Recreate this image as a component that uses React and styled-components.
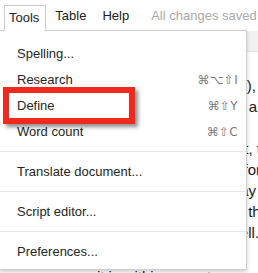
import React from "react";
import styled, { createGlobalStyle } from "styled-components";

const GlobalStyle = createGlobalStyle`
    html, body {
        margin: 0;
        padding: 0;
        background: #fff;
        overflow: hidden;
    }
    body {
        font-family: "Liberation Sans", Arial, sans-serif;
    }
`;

const Page = styled.div`
    width: 258px;
    height: 273px;
    overflow: hidden;
    display: flex;
    flex-direction: column;
    background: #fff;
`;

const MenuBar = styled.div`
    height: 30px;
    flex-shrink: 0;
    display: flex;
    align-items: flex-end;
    padding-left: 4px;
    font-size: 13px;
    color: #222;
    white-space: nowrap;
`;

const Tab = styled.div`
    position: relative;
    z-index: 3;
    height: 26px;
    margin-bottom: -1px;
    margin-right: 1px;
    padding: 0 6px 0 4px;
    line-height: 24px;
    box-sizing: border-box;
    background: #fff;
    border: 1px solid #cdcdcd;
    border-bottom: none;
`;

const Label = styled.div`
    height: 25px;
    line-height: 24px;
    padding: 0 8px;
    box-sizing: border-box;
    margin-bottom: 1px;
`;

const Status = styled.div`
    height: 25px;
    line-height: 24px;
    margin-left: 14px;
    margin-bottom: 1px;
    color: #aaa;
`;

const Body = styled.div`
    position: relative;
    flex: 1;
`;

const Doc = styled.div`
    display: flex;
    flex-direction: column;
    font-size: 15px;
    color: #1a1a1a;
`;

const Ruler = styled.div`
    height: 21px;
    margin-top: 1px;
    background: #f2f2f2;
    border-bottom: 1px solid #e2e2e2;
    box-sizing: border-box;
`;

const Lines = styled.div`
    padding-top: 23px;
    display: flex;
    flex-direction: column;
`;

const Line = styled.div`
    height: 21px;
    line-height: 21px;
    display: flex;
    justify-content: flex-end;
    white-space: nowrap;
    margin-right: ${(p) => p.$shift}px;
    margin-top: ${(p) => p.$gap || 0}px;
`;

const Menu = styled.div`
    position: absolute;
    top: 0;
    left: -1px;
    z-index: 2;
    width: 248px;
    box-sizing: border-box;
    padding: 10px 0 4px;
    background: #fff;
    border: 1px solid #cfcfcf;
    box-shadow: 0 2px 4px rgba(0, 0, 0, 0.2);
    font-size: 13px;
    color: #262626;
`;

const Item = styled.div`
    height: 26px;
    line-height: 26px;
    padding: 0 8px 0 17px;
    display: flex;
    justify-content: space-between;
    white-space: nowrap;
`;

const Shortcut = styled.span`
    font-family: "DejaVu Sans", "Liberation Sans", sans-serif;
    font-size: 12px;
    color: #7a7a7a;
    letter-spacing: 0.3px;
`;

const Divider = styled.div`
    height: 1px;
    background: #e6e6e6;
    margin: 6px 0 7px;
`;

const Highlight = styled.div`
    position: absolute;
    top: 56px;
    left: 3px;
    width: 132px;
    height: 37px;
    box-sizing: border-box;
    border: 6px solid #f0291f;
    box-shadow: 3px 3px 4px rgba(0, 0, 0, 0.45);
`;

const docLines = [
    { text: "the figure is cited in (this),", shift: 2 },
    { text: "which will also provide a", shift: 1 },
    { text: "", shift: 0 },
    { text: "it is correct, t", shift: -3 },
    { text: "in other words for", shift: -3 },
    { text: "in this way", shift: 2 },
    { text: "and the", shift: -11 },
    { text: "as well.", shift: -1 },
    { text: "", shift: 0 },
    { text: "it is within many terms a", shift: 1, gap: 2 },
];

const sections = [
    [
        { label: "Spelling..." },
        { label: "Research", keys: "⌘⌥⇧I" },
        { label: "Define", keys: "⌘⇧Y" },
        { label: "Word count", keys: "⌘⇧C" },
    ],
    [{ label: "Translate document..." }],
    [{ label: "Script editor..." }],
    [{ label: "Preferences..." }],
];

function App() {
    return (
        <Page>
            <GlobalStyle />
            <MenuBar>
                <Tab>Tools</Tab>
                <Label>Table</Label>
                <Label>Help</Label>
                <Status>All changes saved</Status>
            </MenuBar>
            <Body>
                <Doc>
                    <Ruler />
                    <Lines>
                        {docLines.map((line, i) => (
                            <Line key={i} $shift={line.shift} $gap={line.gap}>
                                {line.text}
                            </Line>
                        ))}
                    </Lines>
                </Doc>
                <Menu>
                    {sections.map((section, i) => (
                        <React.Fragment key={i}>
                            {i > 0 && <Divider />}
                            {section.map((item) => (
                                <Item key={item.label}>
                                    <span>{item.label}</span>
                                    {item.keys && <Shortcut>{item.keys}</Shortcut>}
                                </Item>
                            ))}
                        </React.Fragment>
                    ))}
                    <Highlight />
                </Menu>
            </Body>
        </Page>
    );
}

export default App;
